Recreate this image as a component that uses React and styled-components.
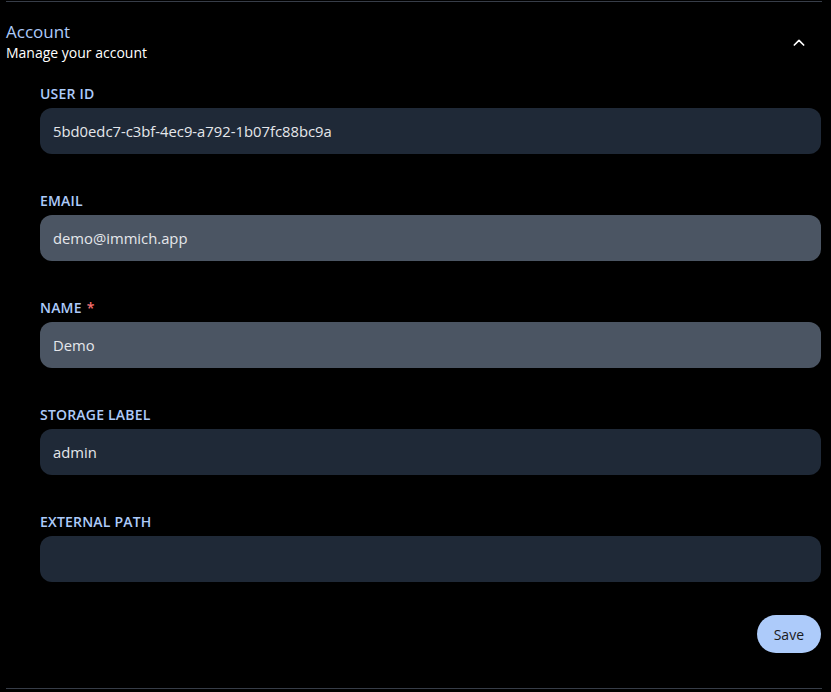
import React, { useState } from 'react';
import styled, { createGlobalStyle } from 'styled-components';

const GlobalStyle = createGlobalStyle`
    body {
        margin: 0;
        background: #000;
        font-family: 'Open Sans', 'Liberation Sans', sans-serif;
    }
`;

const Page = styled.div`
    width: 816px;
    margin-left: 6px;
`;

const PrevSection = styled.div`
    height: 1px;
    border-bottom: 1px solid #373d48;
`;

const Section = styled.section`
    padding: 19px 0 35px;
    border-bottom: 1px solid #373d48;
`;

const Header = styled.div`
    display: flex;
    align-items: center;
    justify-content: space-between;
`;

const Title = styled.div`
    color: #adcbfa;
    font-size: 17px;
    font-weight: 500;
    line-height: 22px;
`;

const Subtitle = styled.div`
    color: #fff;
    font-size: 14px;
    line-height: 20px;
`;

const ToggleButton = styled.button`
    display: flex;
    align-items: center;
    justify-content: center;
    width: 32px;
    height: 32px;
    margin: 2px 7px 0 0;
    padding: 0;
    border: none;
    background: transparent;
    cursor: pointer;
`;

const Form = styled.form`
    display: flex;
    flex-direction: column;
    gap: 39px;
    margin: 23px 0 0 34px;
    padding-right: 1px;
`;

const Field = styled.div`
    display: flex;
    flex-direction: column;
    gap: 7px;
`;

const Label = styled.label`
    color: #adcbfa;
    font-size: 14px;
    font-weight: 600;
    line-height: 15px;
    letter-spacing: 0.2px;
`;

const Required = styled.span`
    color: #f87171;
    margin-left: 5px;
`;

const Input = styled.input`
    box-sizing: border-box;
    width: 100%;
    height: 46px;
    padding: 0 13px;
    border: none;
    border-radius: 12px;
    outline: none;
    background: ${(props) => (props.editable ? '#4b5563' : '#1f2937')};
    color: #e5e7eb;
    font-family: inherit;
    font-size: 14.8px;
`;

const Footer = styled.div`
    display: flex;
    justify-content: flex-end;
    margin-top: -6px;
`;

const SaveButton = styled.button`
    height: 38px;
    padding: 0 17px;
    border: none;
    border-radius: 19px;
    background: #adcbfa;
    color: #1a1a1a;
    font-family: inherit;
    font-size: 14px;
    cursor: pointer;
`;

const ChevronUp = () => (
    <svg width="16" height="16" viewBox="0 0 24 24" fill="none" stroke="#fff" strokeWidth="2.5" strokeLinecap="round" strokeLinejoin="round">
        <polyline points="5 15 12 8 19 15" />
    </svg>
);

const fields = [
    { label: 'USER ID', value: '5bd0edc7-c3bf-4ec9-a792-1b07fc88bc9a' },
    { label: 'EMAIL', value: 'demo@immich.app', editable: true },
    { label: 'NAME', value: 'Demo', editable: true, required: true },
    { label: 'STORAGE LABEL', value: 'admin' },
    { label: 'EXTERNAL PATH', value: '' },
];

const App = () => {
    const [open, setOpen] = useState(true);

    return (
        <Page>
            <GlobalStyle />
            <PrevSection />
            <Section>
                <Header>
                    <div>
                        <Title>Account</Title>
                        <Subtitle>Manage your account</Subtitle>
                    </div>
                    <ToggleButton type="button" onClick={() => setOpen(!open)}>
                        <ChevronUp />
                    </ToggleButton>
                </Header>
                {open && (
                    <Form onSubmit={(e) => e.preventDefault()}>
                        {fields.map((f) => (
                            <Field key={f.label}>
                                <Label>
                                    {f.label}
                                    {f.required && <Required>*</Required>}
                                </Label>
                                <Input editable={f.editable} defaultValue={f.value} readOnly={!f.editable} />
                            </Field>
                        ))}
                        <Footer>
                            <SaveButton type="submit">Save</SaveButton>
                        </Footer>
                    </Form>
                )}
            </Section>
        </Page>
    );
};

export default App;
